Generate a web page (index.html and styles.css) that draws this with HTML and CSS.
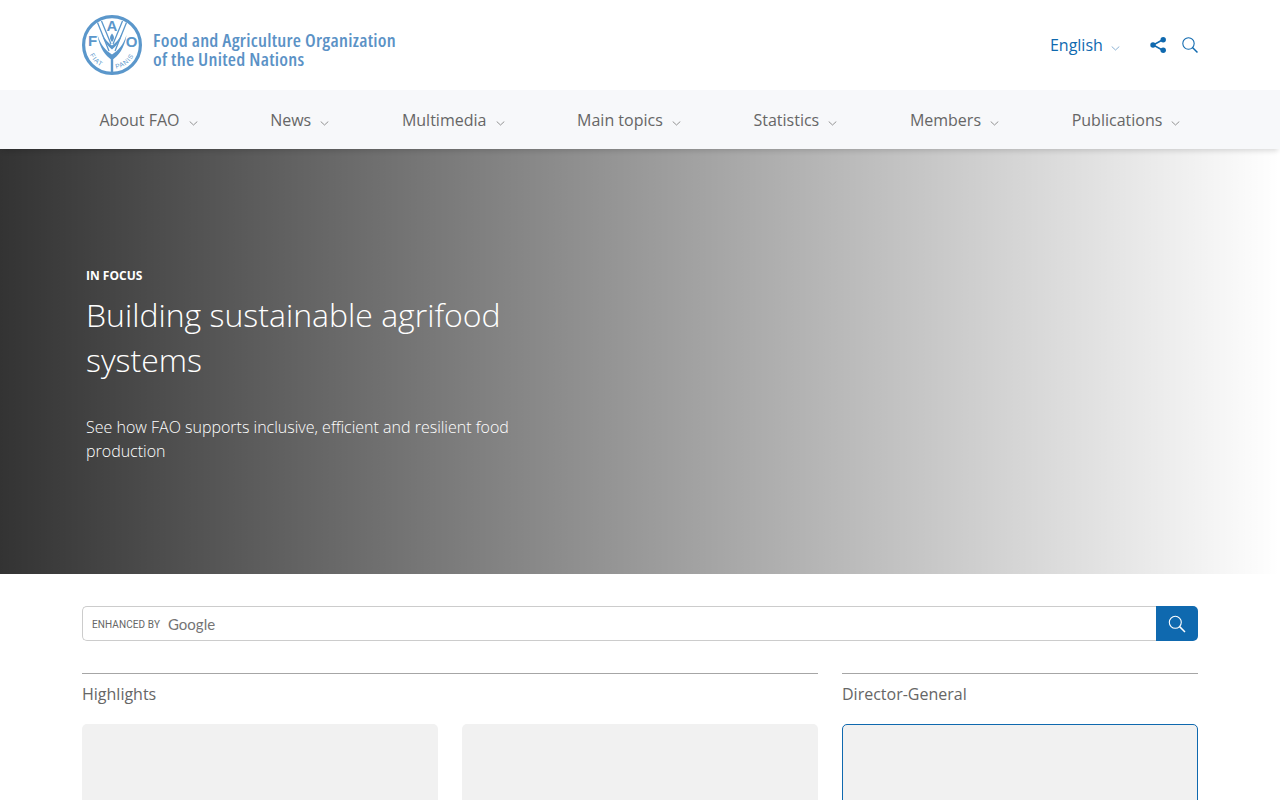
FILE: index.html
```html
<!DOCTYPE html>
<html lang="en">
<head>
    <meta charset="UTF-8">
    <meta name="viewport" content="width=device-width, initial-scale=1.0">
    <title>Food and Agriculture Organization of the United Nations</title>
    <link rel="stylesheet" href="styles.css">
</head>
<body>
    <!-- top bar -->
    <div class="header">
        <div class="container header-row">
            <a href="#" class="logo">
                <svg class="logo-mark" width="60" height="60" viewBox="0 0 60 60" fill="none">
                    <defs>
                        <path id="motto-left" d="M6.5 36 A24 24 0 0 0 27 53.8"/>
                        <path id="motto-right" d="M33 53.8 A24 24 0 0 0 53.5 36"/>
                    </defs>
                    <circle cx="30" cy="30" r="28.4" stroke="#5b97cb" stroke-width="3.2"/>
                    <path d="M15.5 7.5 L27 36 M44.5 7.5 L33 36 M19.5 6 L29 29 M40.5 6 L31 29" stroke="#5b97cb" stroke-width="1.3"/>
                    <path d="M15.5 20 C17.5 33 23.5 41 30 45 C36.5 41 42.5 33 44.5 20 C41.5 30 35.5 36 30 39.5 C24.5 36 18.5 30 15.5 20 Z" fill="#5b97cb"/>
                    <path d="M20 18 C21.5 26 25.5 31 30 34.5 C34.5 31 38.5 26 40 18 C37.5 24 34 28 30 30.5 C26 28 22.5 24 20 18 Z" fill="#5b97cb"/>
                    <path d="M30 18.5 C32.2 21.5 33 23.5 30 27 C27 23.5 27.8 21.5 30 18.5 Z" fill="#5b97cb"/>
                    <path d="M30 42 V57" stroke="#5b97cb" stroke-width="2.4"/>
                    <text x="30" y="15.5" class="logo-letter" text-anchor="middle">A</text>
                    <text x="10.5" y="31" class="logo-letter" text-anchor="middle">F</text>
                    <text x="49.5" y="31.5" class="logo-letter" text-anchor="middle">O</text>
                    <text class="logo-motto"><textPath href="#motto-left" startOffset="4">FIAT</textPath></text>
                    <text class="logo-motto"><textPath href="#motto-right" startOffset="1">PANIS</textPath></text>
                </svg>
                <span class="logo-text">Food and Agriculture Organization<br>of the United Nations</span>
            </a>
            <div class="header-tools">
                <a href="#" class="lang">English
                    <svg class="chev" width="9" height="5" viewBox="0 0 9 5" fill="none"><path d="M0.7 0.5 L4.5 4 L8.3 0.5" stroke="#7fa9cf" stroke-width="0.9"/></svg>
                </a>
                <a href="#" class="tool-icon" aria-label="Share">
                    <svg width="16" height="16" viewBox="0.8 1 16 16" fill="none">
                        <path d="M14 3.5 L4 9 L14 14.5" stroke="#0f69af" stroke-width="1.5"/>
                        <circle cx="14" cy="3.7" r="2.7" fill="#0f69af"/>
                        <circle cx="3.8" cy="9" r="2.7" fill="#0f69af"/>
                        <circle cx="14" cy="14.3" r="2.7" fill="#0f69af"/>
                    </svg>
                </a>
                <a href="#" class="tool-icon" aria-label="Search">
                    <svg width="16" height="16" viewBox="0 0 18 18" fill="none">
                        <circle cx="7.3" cy="7.3" r="6.4" stroke="#0f69af" stroke-width="1.2"/>
                        <path d="M11.8 11.8 L17.4 17.4" stroke="#0f69af" stroke-width="1.7"/>
                    </svg>
                </a>
            </div>
        </div>
    </div>

    <!-- main navigation -->
    <div class="nav">
        <div class="container nav-row">
            <a href="#" class="nav-link">About FAO <svg class="chev" width="9" height="5" viewBox="0 0 9 5" fill="none"><path d="M0.7 0.5 L4.5 4 L8.3 0.5" stroke="#888" stroke-width="0.9"/></svg></a>
            <a href="#" class="nav-link">News <svg class="chev" width="9" height="5" viewBox="0 0 9 5" fill="none"><path d="M0.7 0.5 L4.5 4 L8.3 0.5" stroke="#888" stroke-width="0.9"/></svg></a>
            <a href="#" class="nav-link">Multimedia <svg class="chev" width="9" height="5" viewBox="0 0 9 5" fill="none"><path d="M0.7 0.5 L4.5 4 L8.3 0.5" stroke="#888" stroke-width="0.9"/></svg></a>
            <a href="#" class="nav-link">Main topics <svg class="chev" width="9" height="5" viewBox="0 0 9 5" fill="none"><path d="M0.7 0.5 L4.5 4 L8.3 0.5" stroke="#888" stroke-width="0.9"/></svg></a>
            <a href="#" class="nav-link">Statistics <svg class="chev" width="9" height="5" viewBox="0 0 9 5" fill="none"><path d="M0.7 0.5 L4.5 4 L8.3 0.5" stroke="#888" stroke-width="0.9"/></svg></a>
            <a href="#" class="nav-link">Members <svg class="chev" width="9" height="5" viewBox="0 0 9 5" fill="none"><path d="M0.7 0.5 L4.5 4 L8.3 0.5" stroke="#888" stroke-width="0.9"/></svg></a>
            <a href="#" class="nav-link">Publications <svg class="chev" width="9" height="5" viewBox="0 0 9 5" fill="none"><path d="M0.7 0.5 L4.5 4 L8.3 0.5" stroke="#888" stroke-width="0.9"/></svg></a>
        </div>
    </div>

    <!-- hero -->
    <div class="hero">
        <div class="container">
            <div class="hero-text">
                <div class="hero-label">IN FOCUS</div>
                <h1 class="hero-title">Building sustainable agrifood systems</h1>
                <p class="hero-desc">See how FAO supports inclusive, efficient and resilient food production</p>
            </div>
        </div>
    </div>

    <div class="container">
        <!-- site search -->
        <form class="search">
            <div class="search-box">
                <span class="enhanced">ENHANCED BY</span>
                <span class="google">Google</span>
            </div>
            <button type="button" class="search-btn" aria-label="Search">
                <svg width="18" height="18" viewBox="0 0 18 18" fill="none">
                    <circle cx="7.3" cy="7.3" r="6" stroke="#fff" stroke-width="1.1"/>
                    <path d="M11.6 11.6 L17 17" stroke="#fff" stroke-width="1.5"/>
                </svg>
            </button>
        </form>

        <div class="columns">
            <div class="col-main">
                <h2 class="section-title">Highlights</h2>
                <div class="cards">
                    <div class="card"></div>
                    <div class="card"></div>
                </div>
            </div>
            <div class="col-side">
                <h2 class="section-title">Director-General</h2>
                <div class="card card-dg"></div>
            </div>
        </div>
    </div>
</body>
</html>
```

FILE: styles.css
```css
html, body {
    height: 800px;
    overflow: hidden;
}

body {
    font-family: "Open Sans", Arial, sans-serif;
    margin: 0;
    padding: 0;
    background-color: #fff;
    color: #666;
}

a {
    text-decoration: none;
}

.container {
    width: 1116px;
    margin: 0 auto;
}

/* top bar */
.header {
    height: 90px;
    background-color: #fff;
}

.header-row {
    display: flex;
    justify-content: space-between;
    align-items: center;
    height: 90px;
}

.logo {
    display: flex;
    align-items: center;
    gap: 11px;
}

.logo-mark {
    display: block;
}

.logo-letter {
    font-family: "Liberation Sans", Arial, sans-serif;
    font-size: 15px;
    font-weight: bold;
    fill: #5b97cb;
}

.logo-motto {
    font-family: "Liberation Sans", Arial, sans-serif;
    font-size: 6.5px;
    fill: #5b97cb;
    letter-spacing: 0.8px;
}

.logo-text {
    font-family: "Open Sans", Arial, sans-serif;
    font-stretch: 75%;
    font-size: 18.8px;
    font-weight: 600;
    letter-spacing: 0.27px;
    line-height: 19px;
    color: #5b92c6;
    padding-top: 10px;
}

.header-tools {
    display: flex;
    align-items: center;
}

.lang {
    font-size: 16px;
    color: #0f69af;
    margin-right: 14px;
}

.chev {
    margin-left: 5px;
    vertical-align: 0;
}

.lang .chev {
    margin-left: 4px;
}

.tool-icon {
    display: block;
    height: 16px;
    margin-left: 16px;
}

.tool-icon svg {
    display: block;
}

/* navigation */
.nav {
    position: relative;
    height: 59px;
    background-color: #f7f8fa;
    box-shadow: 0 4px 5px -2px rgba(0, 0, 0, 0.14);
}

.nav-row {
    display: flex;
    justify-content: space-between;
    align-items: center;
    box-sizing: border-box;
    height: 59px;
    padding: 0 17.5px;
}

.nav-link {
    font-size: 16px;
    color: #666;
}

/* hero */
.hero {
    height: 425px;
    background: linear-gradient(to right, rgba(0, 0, 0, 0.8), rgba(0, 0, 0, 0));
}

.hero-text {
    width: 440px;
    padding: 119px 0 0 4px;
    color: #fff;
}

.hero-label {
    font-size: 12px;
    font-weight: bold;
    line-height: 16px;
}

.hero-title {
    font-size: 32px;
    font-weight: 300;
    line-height: 45px;
    margin: 8px 0 0;
}

.hero-desc {
    font-size: 16px;
    font-weight: 300;
    line-height: 24px;
    margin: 33px 0 0;
}

/* search */
.search {
    display: flex;
    height: 35px;
    margin-top: 32px;
}

.search-box {
    flex-grow: 1;
    display: flex;
    align-items: center;
    box-sizing: border-box;
    border: 1px solid #ccc;
    border-right: 0;
    border-radius: 5px 0 0 5px;
    padding-left: 9px;
}

.enhanced {
    font-family: Roboto, Arial, sans-serif;
    font-size: 10px;
    color: #666;
    letter-spacing: 0.1px;
    margin-top: 1px;
}

.google {
    font-family: Lato, Arial, sans-serif;
    font-size: 15px;
    color: #757575;
    margin-left: 8px;
}

.search-btn {
    display: flex;
    align-items: center;
    justify-content: center;
    width: 42px;
    border: 0;
    padding: 0;
    background-color: #0f69af;
    border-radius: 0 5px 5px 0;
}

/* content columns */
.columns {
    display: flex;
    gap: 24px;
    margin-top: 32px;
}

.col-main {
    width: 736px;
}

.col-side {
    width: 356px;
}

.section-title {
    font-size: 16px;
    font-weight: 400;
    line-height: 24px;
    color: #666;
    margin: 0 0 18px;
    padding-top: 8px;
    border-top: 1px solid #a6a6a6;
}

.cards {
    display: flex;
    gap: 24px;
}

.card {
    width: 356px;
    height: 200px;
    box-sizing: border-box;
    background-color: #f1f1f1;
    border-radius: 5px;
}

.card-dg {
    border: 1px solid #0f69af;
}
```
